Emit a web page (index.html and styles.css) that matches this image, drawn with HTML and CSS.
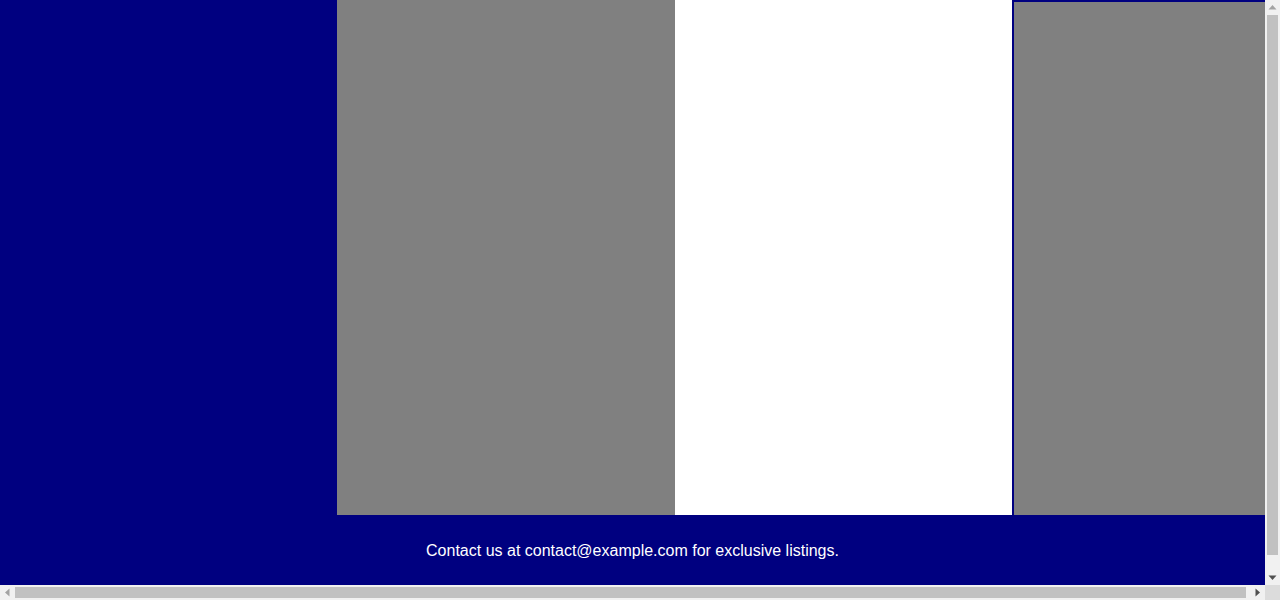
FILE: index.html
```html
<!DOCTYPE html>
<html lang="en">
<head>
<meta charset="utf-8">
<title>Listings</title>
<link rel="stylesheet" href="styles.css">
</head>
<body>
<div class="page">
  <main class="columns">
    <aside class="col col-side"></aside>
    <section class="col col-gray"></section>
    <section class="col col-white"></section>
    <section class="col col-boxed"></section>
  </main>
  <footer class="footer">
    <p class="footer-text">Contact us at contact@example.com for exclusive listings.</p>
  </footer>
</div>
<div class="sb sb-v" aria-hidden="true">
  <svg class="sb-arrow" width="15" height="15" viewBox="0 0 15 15"><polygon points="3.5,9.5 11.5,9.5 7.5,5" fill="#a3a3a3"/></svg>
  <div class="sb-track-v"><div class="sb-thumb-v"></div></div>
  <svg class="sb-arrow" width="15" height="15" viewBox="0 0 15 15"><polygon points="3.5,5.5 11.5,5.5 7.5,10" fill="#505050"/></svg>
</div>
<div class="sb sb-h" aria-hidden="true">
  <svg class="sb-arrow" width="15" height="15" viewBox="0 0 15 15"><polygon points="9.5,3.5 9.5,11.5 5,7.5" fill="#a3a3a3"/></svg>
  <div class="sb-track-h"><div class="sb-thumb-h"></div></div>
  <svg class="sb-arrow" width="15" height="15" viewBox="0 0 15 15"><polygon points="5.5,3.5 5.5,11.5 10,7.5" fill="#505050"/></svg>
</div>
<div class="sb-corner" aria-hidden="true"></div>
</body>
</html>
```

FILE: styles.css
```css
html, body {
  margin: 0;
  padding: 0;
}
body {
  background: #000080;
  font-family: "Liberation Sans", Arial, sans-serif;
  font-size: 16px;
  overflow: hidden;
}
.page {
  width: 1269px;
  padding-bottom: 16px;
}
.columns {
  display: flex;
  height: 515px;
}
.col {
  box-sizing: border-box;
  flex: none;
}
.col-side {
  width: 337px;
  background: #000080;
}
.col-gray {
  width: 338px;
  background: #808080;
}
.col-white {
  width: 337px;
  background: #ffffff;
}
.col-boxed {
  width: 257px;
  height: 517px;
  background: #808080;
  border: 2px solid #000080;
}
.footer {
  width: 1265px;
  padding: 27px 0 25px;
  text-align: center;
  color: #ffffff;
}
.footer-text {
  margin: 0;
}

/* simulated classic scrollbars */
.sb {
  position: fixed;
  background: #f1f1f1;
  display: flex;
}
.sb-v {
  top: 0;
  right: 0;
  width: 15px;
  height: 585px;
  flex-direction: column;
}
.sb-h {
  left: 0;
  bottom: 0;
  width: 1265px;
  height: 15px;
  flex-direction: row;
}
.sb-arrow {
  flex: none;
  display: block;
}
.sb-track-v {
  flex: 1;
  padding: 0 2px 15px;
}
.sb-thumb-v {
  height: 540px;
  background: #c1c1c1;
}
.sb-track-h {
  flex: 1;
  padding: 2px 4px 2px 0;
}
.sb-thumb-h {
  height: 11px;
  background: #c1c1c1;
}
.sb-corner {
  position: fixed;
  right: 0;
  bottom: 0;
  width: 15px;
  height: 15px;
  background: #dcdcdc;
}
```
